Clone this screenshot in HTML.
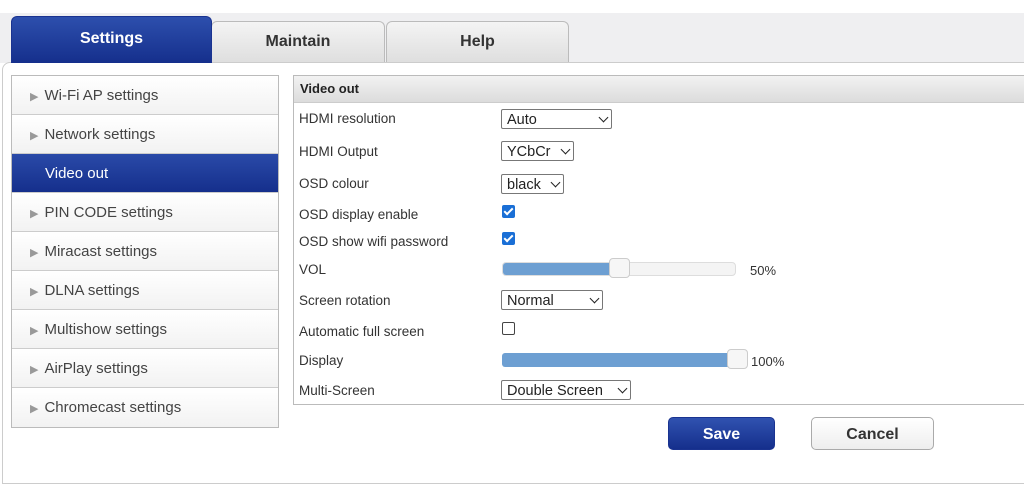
<!DOCTYPE html>
<html><head><style>
body{margin:0;width:1024px;height:469px;background:#fff;font-family:"Liberation Sans",Arial,sans-serif;position:relative;overflow:hidden;color:#333}
.top{position:absolute;left:0;top:13px;width:1024px;height:50px;background:#efeff1}
.tab{position:absolute;text-align:center;font-weight:bold;font-size:16px;border:1px solid #bbb;border-bottom:none;border-radius:6px 6px 0 0;background:linear-gradient(#f4f4f4,#dedede);color:#333;box-sizing:border-box}
.main{position:absolute;left:2px;top:62px;width:1030px;height:420px;background:#fff;border:1px solid #ccc;border-radius:8px 0 0 0}
.side{position:absolute;left:11px;top:75px;width:268px;border:1px solid #bbb;box-sizing:border-box}
.it{height:39px;line-height:39px;border-bottom:1px solid #ccc;font-size:15px;color:#444;padding-left:18px;background:linear-gradient(#fff,#f2f2f2);box-sizing:border-box}
.it:last-child{border-bottom:none}
.it span{color:#999;font-size:11px;margin-right:6px}
.it.act{background:linear-gradient(#2a4aa8,#152f8c);color:#fff;padding-left:33px}
.panel{position:absolute;left:293px;top:75px;width:740px;height:330px;border:1px solid #bbb;box-sizing:border-box}
.ph{height:26px;line-height:26px;background:linear-gradient(#f2f2f2,#dcdcdc);border-bottom:1px solid #ccc;font-weight:bold;font-size:13px;padding-left:6px;color:#222}
.lb{position:absolute;left:299px;font-size:13.5px;color:#333}
.sel{position:absolute;left:501px;height:20px;border:1px solid #777;border-radius:2px;font-size:14.5px;line-height:20px;padding-left:5px;box-sizing:border-box;color:#222;background:#fff}
.sel i{position:absolute;right:4px;top:4px;width:6px;height:6px;border-right:1.6px solid #222;border-bottom:1.6px solid #222;transform:rotate(45deg)}
.cb{position:absolute;left:502px;width:13px;height:13px;border-radius:2px;box-sizing:border-box}
.chk{background:#1a6fd6}
.chk:after{content:"";position:absolute;left:4px;top:1px;width:3px;height:7px;border-right:2px solid #fff;border-bottom:2px solid #fff;transform:rotate(45deg)}
.unc{border:1.3px solid #444;background:#fff}
.tr{position:absolute;left:502px;height:14px;border:1px solid #ddd;border-radius:4px;background:#f4f4f4;box-sizing:border-box}
.fill{position:absolute;left:0;top:0;height:12px;background:#6d9fd2;border-radius:3px}
.th{position:absolute;width:21px;height:20px;border:1px solid #ccc;background:#f6f6f6;border-radius:4px;box-sizing:border-box}
.pct{position:absolute;font-size:13px;color:#333}
.btn{position:absolute;top:417px;height:33px;line-height:33px;text-align:center;font-weight:bold;font-size:16px;border-radius:5px;box-sizing:border-box}
</style></head><body>
<div class="top"></div>
<div class="tab" style="left:211px;top:21px;width:174px;height:42px;line-height:40px">Maintain</div>
<div class="tab" style="left:386px;top:21px;width:183px;height:42px;line-height:40px">Help</div>
<div class="main"></div>
<div class="tab" style="left:11px;top:16px;width:201px;height:47px;line-height:44px;background:linear-gradient(#2d4fad,#152f8c);color:#fff;border-color:#1a3390">Settings</div>
<div class="side">
<div class="it"><span>▶</span>Wi-Fi AP settings</div>
<div class="it"><span>▶</span>Network settings</div>
<div class="it act">Video out</div>
<div class="it"><span>▶</span>PIN CODE settings</div>
<div class="it"><span>▶</span>Miracast settings</div>
<div class="it"><span>▶</span>DLNA settings</div>
<div class="it"><span>▶</span>Multishow settings</div>
<div class="it"><span>▶</span>AirPlay settings</div>
<div class="it"><span>▶</span>Chromecast settings</div>
</div>
<div class="panel"><div class="ph">Video out</div></div>
<div class="lb" style="top:111px">HDMI resolution</div>
<div class="sel" style="top:109px;width:111px">Auto<i></i></div>
<div class="lb" style="top:144px">HDMI Output</div>
<div class="sel" style="top:141px;width:73px">YCbCr<i></i></div>
<div class="lb" style="top:176px">OSD colour</div>
<div class="sel" style="top:174px;width:63px">black<i></i></div>
<div class="lb" style="top:207px">OSD display enable</div>
<div class="cb chk" style="top:205px"></div>
<div class="lb" style="top:234px">OSD show wifi password</div>
<div class="cb chk" style="top:232px"></div>
<div class="lb" style="top:262px">VOL</div>
<div class="tr" style="top:262px;width:234px"><div class="fill" style="width:117px"></div></div>
<div class="th" style="left:609px;top:258px"></div>
<div class="pct" style="left:750px;top:263px">50%</div>
<div class="lb" style="top:293px">Screen rotation</div>
<div class="sel" style="top:290px;width:102px">Normal<i></i></div>
<div class="lb" style="top:324px">Automatic full screen</div>
<div class="cb unc" style="top:322px"></div>
<div class="lb" style="top:353px">Display</div>
<div class="tr" style="top:353px;width:240px;border:none"><div class="fill" style="width:236px;height:14px"></div></div>
<div class="th" style="left:727px;top:349px"></div>
<div class="pct" style="left:751px;top:354px">100%</div>
<div class="lb" style="top:383px">Multi-Screen</div>
<div class="sel" style="top:380px;width:130px">Double Screen<i></i></div>
<div class="btn" style="left:668px;width:107px;background:linear-gradient(#3052b0,#152f8c);color:#fff;border:1px solid #1a3390">Save</div>
<div class="btn" style="left:811px;width:123px;background:linear-gradient(#fff,#eee);color:#333;border:1px solid #aaa">Cancel</div>
</body></html>
